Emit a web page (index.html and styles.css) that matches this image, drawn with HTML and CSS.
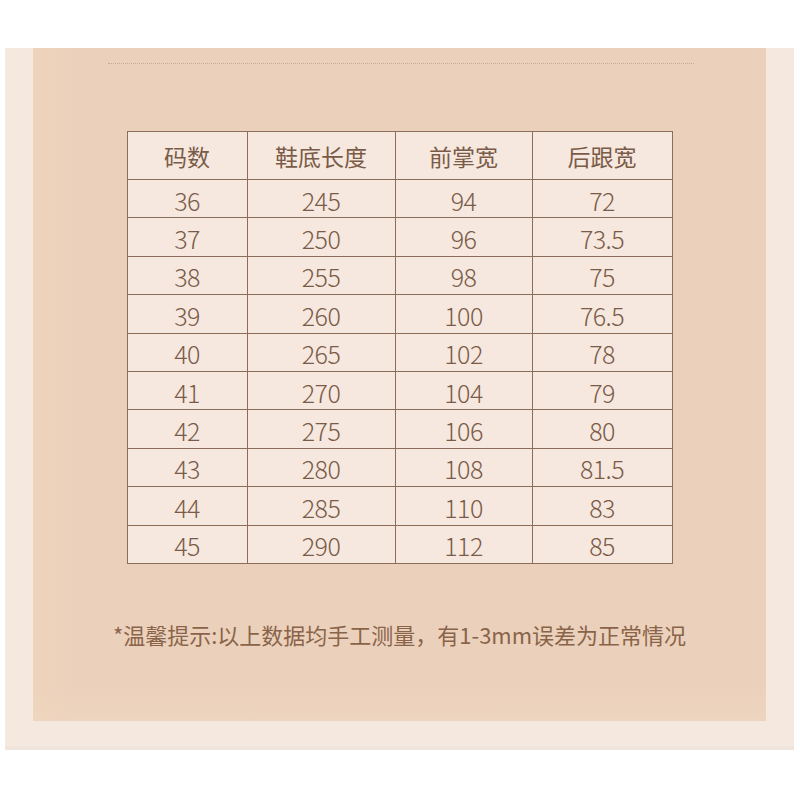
FILE: index.html
```html
<!DOCTYPE html>
<html lang="zh-CN">
<head>
<meta charset="utf-8">
<title>尺码表</title>
<link rel="stylesheet" href="styles.css">
</head>
<body>
<div class="page">
  <div class="frame">
    <div class="panel">
      <div class="rule"></div>
      <table class="size-table">
        <colgroup>
          <col class="c1"><col class="c2"><col class="c3"><col class="c4">
        </colgroup>
        <thead>
          <tr><th>码数</th><th>鞋底长度</th><th>前掌宽</th><th>后跟宽</th></tr>
        </thead>
        <tbody>
          <tr><td>36</td><td>245</td><td>94</td><td>72</td></tr>
          <tr><td>37</td><td>250</td><td>96</td><td>73.5</td></tr>
          <tr><td>38</td><td>255</td><td>98</td><td>75</td></tr>
          <tr><td>39</td><td>260</td><td>100</td><td>76.5</td></tr>
          <tr><td>40</td><td>265</td><td>102</td><td>78</td></tr>
          <tr><td>41</td><td>270</td><td>104</td><td>79</td></tr>
          <tr><td>42</td><td>275</td><td>106</td><td>80</td></tr>
          <tr><td>43</td><td>280</td><td>108</td><td>81.5</td></tr>
          <tr><td>44</td><td>285</td><td>110</td><td>83</td></tr>
          <tr><td>45</td><td>290</td><td>112</td><td>85</td></tr>
        </tbody>
      </table>
      <p class="note">*温馨提示:以上数据均手工测量，有1-3mm误差为正常情况</p>
    </div>
  </div>
</div>
</body>
</html>
```

FILE: styles.css
```css
html, body {
  margin: 0;
  padding: 0;
  background: #ffffff;
}

body {
  font-family: "Noto Sans CJK SC", "Noto Sans", sans-serif;
  color: #7a5b47;
}

.page {
  padding-top: 48px;
  height: 752px;
}

.frame {
  margin-left: 5px;
  width: 789px;
  height: 702px;
  box-sizing: border-box;
  padding: 0 28px 0 28px;
  background: linear-gradient(to bottom, #f5e9df 0, #f5e9df 698px, #efe5dd 698px);
}

.panel {
  height: 673px;
  box-sizing: border-box;
  padding-top: 15px;
  background:
    linear-gradient(to right, rgba(240, 214, 188, 0.6) 0, rgba(236, 211, 191, 0) 40px),
    linear-gradient(to bottom, #ebd1bc 0, #ebd1bc 640px, #eed5c0 673px);
  display: flex;
  flex-direction: column;
  align-items: center;
}

.rule {
  width: 586px;
  height: 0;
  border-top: 1px dotted #c7aa92;
  margin-left: 2px;
}

.size-table {
  margin-top: 67px;
  border-collapse: collapse;
  background: #f6e8df;
  table-layout: fixed;
  width: 545px;
}

.c1 { width: 120px; }
.c2 { width: 148px; }
.c3 { width: 137px; }
.c4 { width: 140px; }

.size-table th,
.size-table td {
  border: 1px solid #8c6d59;
  text-align: center;
  padding: 0;
  color: #7a5b47;
  box-sizing: border-box;
}

.size-table th {
  height: 48px;
  font-size: 23px;
  font-weight: 400;
  padding-top: 1px;
}

.size-table td {
  height: 38.4px;
  font-size: 25px;
  font-weight: 300;
  letter-spacing: -0.6px;
  line-height: 1;
  padding-top: 3px;
}

.note {
  margin: 57px 0 0 0;
  font-size: 22px;
  font-weight: 400;
  color: #8a6449;
  letter-spacing: 0;
  line-height: 1.2;
}
```
